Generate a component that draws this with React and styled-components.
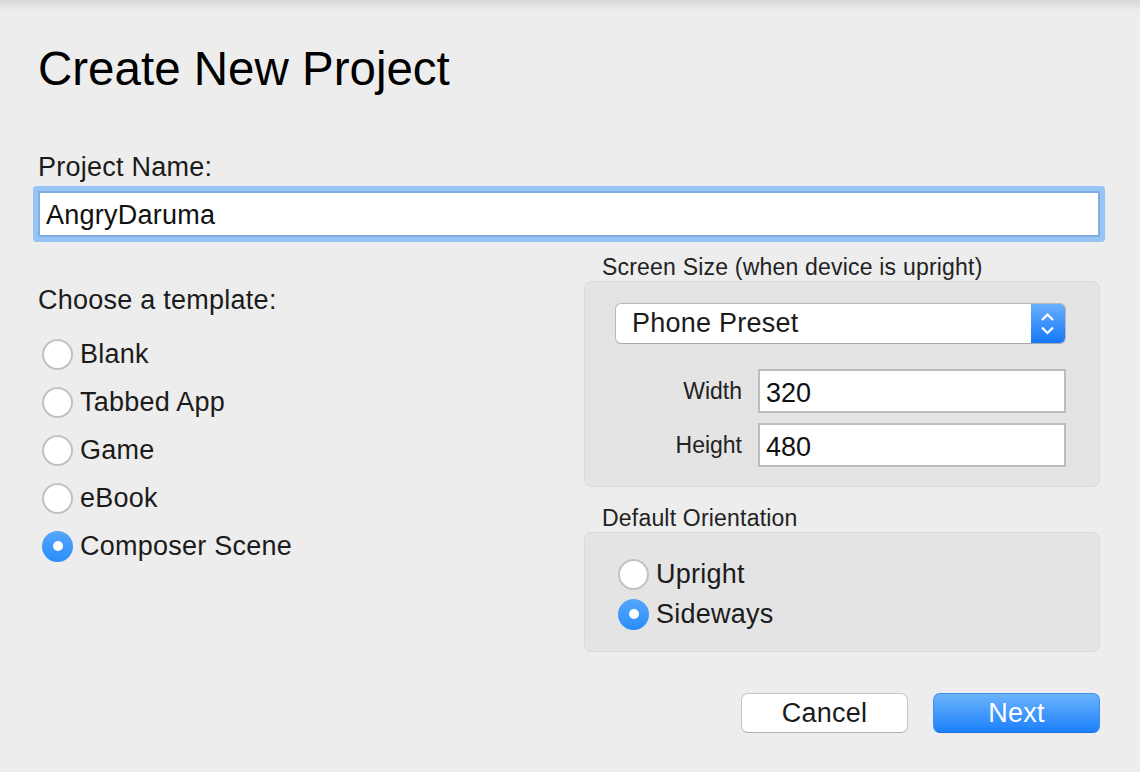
import React from "react";
import styled, { createGlobalStyle } from "styled-components";

const GlobalStyle = createGlobalStyle`
  html, body {
    margin: 0;
    padding: 0;
    background: #ededed;
  }
  body {
    font-family: "Liberation Sans", Arial, sans-serif;
    color: #1b1b1b;
  }
`;

const Dialog = styled.div`
  min-height: 772px;
  box-sizing: border-box;
  padding: 41px 40px 0 38px;
  background: linear-gradient(#d8d8d8 0, #ededed 11px);
`;

const Title = styled.h1`
  margin: 0;
  font-size: 47.5px;
  font-weight: 400;
  line-height: 56px;
  color: #000;
`;

const FieldLabel = styled.div`
  margin-top: 54px;
  font-size: 27px;
  line-height: 32px;
  letter-spacing: 0.25px;
`;

const NameInput = styled.input`
  display: block;
  width: 100%;
  height: 46px;
  box-sizing: border-box;
  margin: 8px 0 0;
  padding: 3px 6px 0;
  border: 2px solid #80aee3;
  border-radius: 1px;
  box-shadow: 0 0 0 5px #98c4f5;
  outline: none;
  background: #fff;
  font-family: inherit;
  font-size: 27px;
  letter-spacing: 0.25px;
  color: #111;
`;

const Columns = styled.div`
  display: grid;
  grid-template-columns: 1fr 516px;
  margin-top: 16px;
`;

const LeftColumn = styled.div`
  padding-top: 31px;
`;

const ChooseLabel = styled.div`
  font-size: 27px;
  line-height: 32px;
  letter-spacing: 0.25px;
`;

const RadioList = styled.div`
  display: flex;
  flex-direction: column;
  margin-top: 14px;
  padding-left: 4px;
`;

const RadioRow = styled.label`
  display: flex;
  align-items: center;
  gap: 7px;
  height: ${(p) => p.$height}px;
  font-size: 27px;
  letter-spacing: 0.25px;
  color: #1b1b1b;
`;

const RadioCircle = styled.span`
  width: 31px;
  height: 31px;
  box-sizing: border-box;
  border-radius: 50%;
  flex-shrink: 0;
  display: flex;
  align-items: center;
  justify-content: center;
  border: ${(p) => (p.$checked ? "none" : "2px solid #c2c2c2")};
  background: ${(p) =>
    p.$checked ? "linear-gradient(#55a6fc, #2a8dfb)" : "#fff"};

  &::after {
    content: "";
    display: ${(p) => (p.$checked ? "block" : "none")};
    width: 10px;
    height: 10px;
    border-radius: 50%;
    background: #fff;
  }
`;

const RightColumn = styled.div`
  display: flex;
  flex-direction: column;
`;

const SectionLabel = styled.div`
  margin-top: ${(p) => p.$top || 0}px;
  padding-left: 18px;
  font-size: 23px;
  line-height: 28px;
  letter-spacing: 0.2px;
  color: #222;
`;

const GroupBox = styled.div`
  box-sizing: border-box;
  height: ${(p) => p.$height}px;
  padding: ${(p) => p.$padding};
  background: #e4e4e4;
  border: 1px solid #dadada;
  border-radius: 7px;
`;

const Select = styled.div`
  display: flex;
  height: 41px;
  box-sizing: border-box;
  border: 1px solid #b8b8b8;
  border-bottom-color: #a8a8a8;
  border-radius: 6px;
  background: #fff;
  overflow: hidden;
`;

const SelectText = styled.div`
  flex: 1;
  display: flex;
  align-items: center;
  padding-left: 16px;
  font-size: 27px;
  letter-spacing: 0.25px;
  color: #1b1b1b;
`;

const Stepper = styled.div`
  width: 34px;
  display: flex;
  align-items: center;
  justify-content: center;
  background: linear-gradient(#6aaffb, #1577fb);
`;

const SizeGrid = styled.div`
  display: grid;
  grid-template-columns: 127px 1fr;
  column-gap: 16px;
  row-gap: 10px;
  margin-top: 25px;
  align-items: center;
`;

const SizeLabel = styled.div`
  text-align: right;
  font-size: 23px;
  color: #222;
`;

const SizeInput = styled.input`
  display: block;
  width: 100%;
  height: 44px;
  box-sizing: border-box;
  margin: 0;
  padding: 4px 6px 0;
  border: 2px solid #bdbdbd;
  border-radius: 0;
  outline: none;
  background: #fff;
  font-family: inherit;
  font-size: 27px;
  color: #111;
`;

const Footer = styled.div`
  display: flex;
  justify-content: flex-end;
  gap: 25px;
  margin-top: 41px;
`;

const Button = styled.button`
  width: 167px;
  height: 40px;
  box-sizing: border-box;
  border-radius: 7px;
  font-family: inherit;
  font-size: 27px;
  letter-spacing: 0.25px;
  padding: 0;
  cursor: pointer;
  border: 1px solid ${(p) => (p.$primary ? "#3c8ff5" : "#c6c6c6")};
  border-bottom-color: ${(p) => (p.$primary ? "#1a6fe6" : "#b0b0b0")};
  color: ${(p) => (p.$primary ? "#fff" : "#1b1b1b")};
  background: ${(p) =>
    p.$primary ? "linear-gradient(#6cb3fb, #1b80fb)" : "#fff"};
`;

const templates = ["Blank", "Tabbed App", "Game", "eBook", "Composer Scene"];

const Radio = ({ label, checked, height }) => (
  <RadioRow $height={height}>
    <RadioCircle $checked={checked} />
    {label}
  </RadioRow>
);

export default function App() {
  return (
    <>
      <GlobalStyle />
      <Dialog>
        <Title>Create New Project</Title>

        <FieldLabel>Project Name:</FieldLabel>
        <NameInput defaultValue="AngryDaruma" />

        <Columns>
          <LeftColumn>
            <ChooseLabel>Choose a template:</ChooseLabel>
            <RadioList>
              {templates.map((t) => (
                <Radio
                  key={t}
                  label={t}
                  height={48}
                  checked={t === "Composer Scene"}
                />
              ))}
            </RadioList>
          </LeftColumn>

          <RightColumn>
            <SectionLabel>Screen Size (when device is upright)</SectionLabel>
            <GroupBox $height={206} $padding="21px 33px 0 30px">
              <Select>
                <SelectText>Phone Preset</SelectText>
                <Stepper>
                  <svg width="34" height="39" viewBox="0 0 34 39">
                    <polyline
                      points="11,16 16.5,10.5 22,16"
                      fill="none"
                      stroke="#fff"
                      strokeWidth="2.2"
                    />
                    <polyline
                      points="11,23.5 16.5,29 22,23.5"
                      fill="none"
                      stroke="#fff"
                      strokeWidth="2.2"
                    />
                  </svg>
                </Stepper>
              </Select>
              <SizeGrid>
                <SizeLabel>Width</SizeLabel>
                <SizeInput defaultValue="320" />
                <SizeLabel>Height</SizeLabel>
                <SizeInput defaultValue="480" />
              </SizeGrid>
            </GroupBox>

            <SectionLabel $top={17}>Default Orientation</SectionLabel>
            <GroupBox $height={120} $padding="21px 0 0 33px">
              <Radio label="Upright" height={40} />
              <Radio label="Sideways" height={40} checked />
            </GroupBox>
          </RightColumn>
        </Columns>

        <Footer>
          <Button>Cancel</Button>
          <Button $primary>Next</Button>
        </Footer>
      </Dialog>
    </>
  );
}
